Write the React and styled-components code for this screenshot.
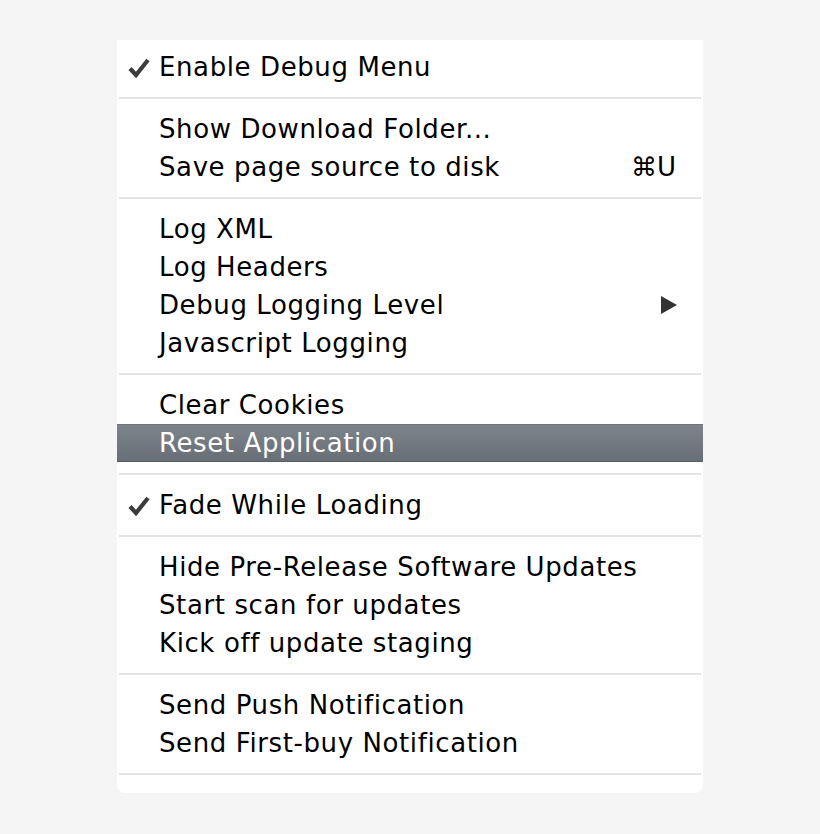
import React from 'react'
import styled, { createGlobalStyle } from 'styled-components'

const Global = createGlobalStyle`
    html, body {
        margin: 0;
        padding: 0;
        background: #f5f5f5;
    }
    body {
        font-family: "DejaVu Sans", "Liberation Sans", sans-serif;
    }
`

const sections = [
    [{ label: 'Enable Debug Menu', checked: true }],
    [
        { label: 'Show Download Folder...' },
        { label: 'Save page source to disk', shortcut: '⌘U' },
    ],
    [
        { label: 'Log XML' },
        { label: 'Log Headers' },
        { label: 'Debug Logging Level', submenu: true },
        { label: 'Javascript Logging' },
    ],
    [
        { label: 'Clear Cookies' },
        { label: 'Reset Application', active: true },
    ],
    [{ label: 'Fade While Loading', checked: true }],
    [
        { label: 'Hide Pre-Release Software Updates' },
        { label: 'Start scan for updates' },
        { label: 'Kick off update staging' },
    ],
    [
        { label: 'Send Push Notification' },
        { label: 'Send First-buy Notification' },
    ],
]

const Check = () => (
    <svg width="24" height="22" viewBox="0 0 24 22">
        <path d="M3 11.5 L9 18 L21 3" fill="none" stroke="#3c3c3c" strokeWidth="4.2" strokeLinejoin="miter" />
    </svg>
)

const Arrow = () => (
    <svg width="18" height="20" viewBox="0 0 18 20">
        <path d="M1 1 L17 10 L1 19 Z" fill="#333" />
    </svg>
)

const App = () => {
    return (
        <>
            <Global />
            <Page>
                <Menu>
                    {sections.map((items, i) => (
                        <React.Fragment key={i}>
                            {items.map(item => (
                                <Item key={item.label} active={item.active}>
                                    <Mark>{item.checked && <Check />}</Mark>
                                    <Label>{item.label}</Label>
                                    {item.shortcut && <Shortcut>{item.shortcut}</Shortcut>}
                                    {item.submenu && <Sub><Arrow /></Sub>}
                                </Item>
                            ))}
                            <Separator />
                        </React.Fragment>
                    ))}
                </Menu>
            </Page>
        </>
    )
}

const Page = styled.div`
    width: 820px;
    height: 834px;
    padding: 40px 0 0 117px;
    box-sizing: border-box;
    display: flex;
    align-items: flex-start;
`

const Menu = styled.div`
    width: 586px;
    height: 753px;
    box-sizing: border-box;
    background: #fff;
    padding: 8px 0 7px;
    border-radius: 0 0 8px 8px;
`

const Item = styled.div`
    height: 38px;
    display: flex;
    align-items: center;
    box-sizing: border-box;
    padding: 0 25px 0 10px;
    font-size: 26px;
    letter-spacing: 0.6px;
    color: ${p => p.active ? '#fff' : '#000'};
    background: ${p => p.active ? 'linear-gradient(#7e848c, #686e76)' : 'transparent'};
    border-top: 1px solid ${p => p.active ? '#6f757d' : 'transparent'};
    border-bottom: 1px solid ${p => p.active ? '#595e65' : 'transparent'};
`

const Mark = styled.span`
    width: 32px;
    display: flex;
    align-items: center;
    padding-top: 1px;
`

const Label = styled.span`
    flex: 1;
    white-space: nowrap;
`

const Shortcut = styled.span`
    letter-spacing: 0;
    padding-right: 2px;
`

const Sub = styled.span`
    display: flex;
    align-items: center;
`

const Separator = styled.div`
    height: 2px;
    margin: 11px 2px;
    background: #e5e5e5;
`

export default App
